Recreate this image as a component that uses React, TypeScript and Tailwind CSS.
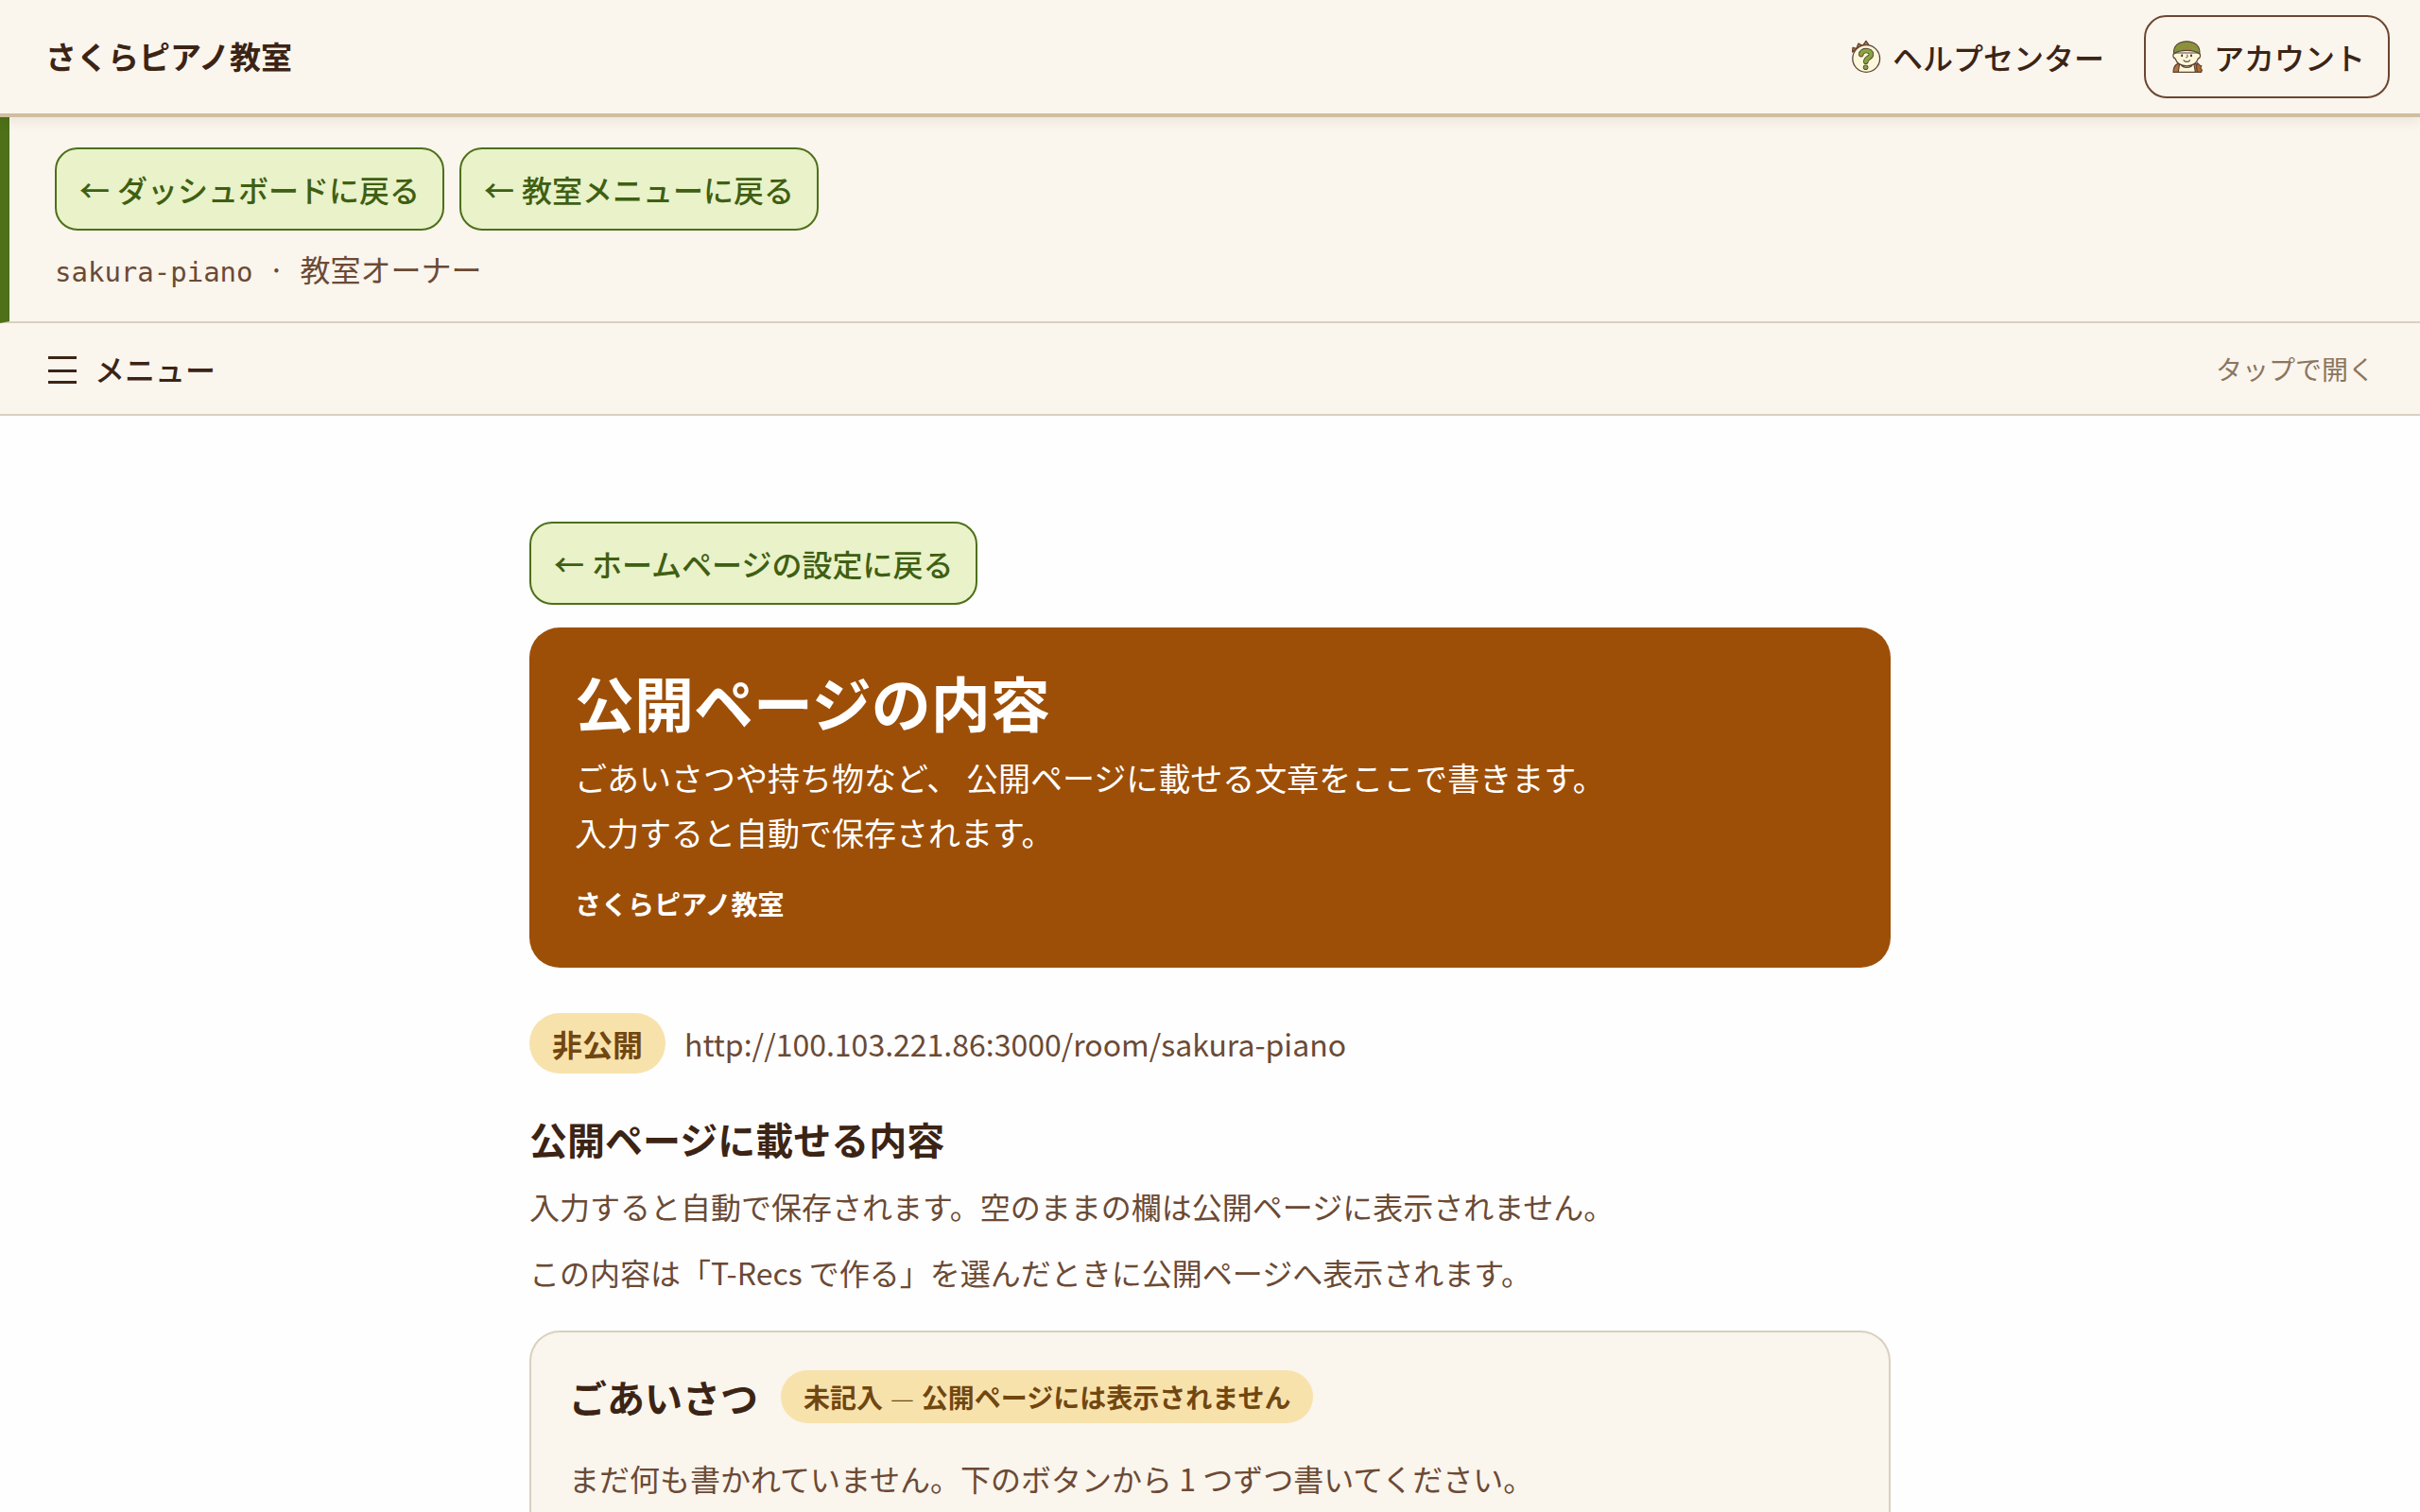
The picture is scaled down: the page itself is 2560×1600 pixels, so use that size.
import React from 'react';

interface BackLinkProps {
  label: string;
}

function BackLink({ label }: BackLinkProps) {
  return (
    <a
      href="#"
      className="inline-flex h-22 items-center gap-2 rounded-3xl border-2 border-[#4d7018] bg-[#e9f2c9] px-6 text-[32px] font-medium text-[#3f5f12]"
    >
      <span>←</span>
      {label}
    </a>
  );
}

// Egg with a question mark and three little spikes
function HelpIcon() {
  return (
    <svg viewBox="0 0 40 40" className="size-10 shrink-0" aria-hidden="true">
      <g stroke="#5e4332" strokeWidth="1.3" strokeLinejoin="round">
        <path d="M5.6 15 L6 10.4 L10.5 11.6 Z" fill="#c9742c" />
        <path d="M10 11 L12 6 L16.4 8.4 Z" fill="#c9742c" />
        <path d="M16.8 7.8 L20 3.4 L22.8 7.4 Z" fill="#c9742c" />
        <ellipse cx="20.2" cy="22" rx="14.4" ry="14.3" fill="#fdf8dc" />
      </g>
      <path
        d="M14.8 17.6 C14.8 12.2 25.6 12.2 25.4 17.8 C25.2 21.4 19.8 20.8 19.8 25.2"
        fill="none"
        stroke="#5e4332"
        strokeWidth="5.6"
        strokeLinecap="round"
      />
      <circle cx="19.6" cy="31.2" r="2.8" fill="#5e4332" />
      <path
        d="M14.8 17.6 C14.8 12.2 25.6 12.2 25.4 17.8 C25.2 21.4 19.8 20.8 19.8 25.2"
        fill="none"
        stroke="#86a63f"
        strokeWidth="3.8"
        strokeLinecap="round"
      />
      <circle cx="19.6" cy="31.2" r="1.9" fill="#86a63f" />
    </svg>
  );
}

function AccountIcon() {
  return (
    <svg viewBox="0 0 40 40" className="size-10 shrink-0" aria-hidden="true">
      <g stroke="#5e4332" strokeWidth="1.2" strokeLinejoin="round" strokeLinecap="round">
        <path d="M5 36.4 C5.2 31.4 6.2 29 9.5 27.6 H29 C32.6 29 33.8 31.4 34.4 36.4 Z" fill="#b8733a" />
        <path d="M29.5 30 L30.6 26.6 L32.8 29 L34.8 29.8 L33.8 32 L35.4 34 L34.6 36.4 H30.4 Z" fill="#b56a2c" />
        <path d="M10.2 36.4 L11.6 28 H27 L28.4 36.4 Z" fill="#fdf8dc" />
        <path d="M13.4 28 C14.4 32.4 24.2 32.4 25.2 28" fill="#fdf8dc" />
        <path d="M6.4 16 C3.8 17.6 4.6 21.4 7 21.8 C8.6 27 13.4 29.8 19.2 29.8 C25 29.8 29.8 27 31.4 21.8 C33.8 21.4 34.6 17.6 32 16 Z" fill="#fdf8dc" />
        <path d="M5.6 17 C4.6 8.4 11 3.8 19.2 3.8 C27.4 3.8 33.8 8.4 32.8 17 C28.8 14 24.6 13.4 19.2 13.4 C13.8 13.4 9.6 14 5.6 17 Z" fill="#85963f" />
        <path d="M16 23.8 C17.2 26 21.4 26 22.6 23.8" fill="none" />
        <path d="M19.6 18 C20.8 20 20.6 21 18.6 20.8" fill="none" strokeWidth="1" />
      </g>
      <g fill="#b9702c">
        <circle cx="12" cy="9" r=".8" />
        <circle cx="16" cy="7" r=".8" />
        <circle cx="20" cy="9" r=".8" />
        <circle cx="24" cy="7" r=".8" />
        <circle cx="27.6" cy="10" r=".8" />
        <circle cx="16" cy="11.4" r=".8" />
        <circle cx="23.6" cy="11.4" r=".8" />
        <circle cx="9.4" cy="12.6" r=".8" />
      </g>
      <ellipse cx="14.2" cy="18.8" rx="1" ry="1.5" fill="#4a3023" />
      <ellipse cx="24" cy="18.8" rx="1" ry="1.5" fill="#4a3023" />
    </svg>
  );
}

function SiteHeader() {
  return (
    <header className="relative z-10 flex h-31 items-center justify-between border-b-4 border-[#cfbf9f] bg-[#faf5ed] pr-8 pl-12 shadow-[0_4px_12px_rgba(60,36,21,0.08)]">
      <a href="#" className="text-[33px] font-bold">
        さくらピアノ教室
      </a>
      <nav className="flex items-center gap-4 text-[32px] font-medium">
        <a href="#" className="flex h-22 items-center gap-2 border-2 border-transparent px-6">
          <HelpIcon />
          ヘルプセンター
        </a>
        <button
          type="button"
          className="flex h-22 items-center gap-2 rounded-3xl border-2 border-[#6b4630] px-6"
        >
          <AccountIcon />
          アカウント
        </button>
      </nav>
    </header>
  );
}

function RoomBar() {
  return (
    <section className="border-b-2 border-l-10 border-b-[#d9d0bf] border-l-[#4d7018] bg-[#faf5ed] px-12 pt-8 pb-6">
      <div className="flex flex-wrap gap-4">
        <BackLink label="ダッシュボードに戻る" />
        <BackLink label="教室メニューに戻る" />
      </div>
      <p className="mt-3 flex items-baseline gap-4 text-[32px] leading-[56px] text-[#6b4a35]">
        <span className="font-['DejaVu_Sans_Mono','Noto_Sans_CJK_JP',monospace] text-[29px]">sakura-piano</span>
        <span>·</span>
        <span>教室オーナー</span>
      </p>
    </section>
  );
}

function MenuBar() {
  return (
    <button
      type="button"
      className="flex h-[98px] w-full items-center justify-between border-b-2 border-[#d9d0bf] bg-[#faf5ed] px-12"
    >
      <span className="flex items-center gap-4 text-[32px] font-medium">
        <svg viewBox="0 0 36 36" className="size-9" aria-hidden="true">
          <path d="M3 6.5 H33 M3 20.5 H33 M3 32.5 H33" stroke="#3c2415" strokeWidth="3" />
        </svg>
        メニュー
      </span>
      <span className="text-[28px] text-[#8b7560]">タップで開く</span>
    </button>
  );
}

export default function App() {
  return (
    <div className="min-h-screen bg-[#fefefe] font-['Noto_Sans_CJK_JP',sans-serif] text-[#3c2415]">
      <SiteHeader />
      <RoomBar />
      <MenuBar />

      <main className="mx-auto max-w-[1440px] pt-28">
        <BackLink label="ホームページの設定に戻る" />

        <section className="mt-6 rounded-4xl bg-[#9d4f08] px-12 pt-10 pb-12 text-white">
          <h1 className="text-[63px] leading-[76px] font-bold">公開ページの内容</h1>
          <p className="mt-3.5 text-[34px] leading-[58px]">
            ごあいさつや持ち物など、 公開ページに載せる文章をここで書きます。
            <br />
            入力すると自動で保存されます。
          </p>
          <p className="mt-6.5 text-[28px] leading-10 font-bold">さくらピアノ教室</p>
        </section>

        {/* Publish state */}
        <div className="mt-12 flex items-center gap-5">
          <span className="flex h-16 items-center rounded-full bg-[#f8e2ac] px-6 text-[32px] font-bold text-[#714711]">
            非公開
          </span>
          <a href="#" className="text-[32px] leading-[56px] text-[#6b4a35]">
            http://100.103.221.86:3000/room/sakura-piano
          </a>
        </div>

        <h2 className="mt-10 text-[40px] leading-[58px] font-bold">公開ページに載せる内容</h2>
        <div className="mt-3.5 flex flex-col gap-3.5 text-[32px] leading-[56px] text-[#6b4a35]">
          <p>入力すると自動で保存されます。空のままの欄は公開ページに表示されません。</p>
          <p>この内容は「T-Recs で作る」を選んだときに公開ページへ表示されます。</p>
        </div>

        <section className="mt-8.5 rounded-t-4xl border-2 border-b-0 border-[#d9d0bf] bg-[#faf5ed] p-10">
          <div className="flex items-center gap-6">
            <h3 className="text-[40px] leading-14 font-bold">ごあいさつ</h3>
            <span className="flex h-14 items-center gap-2 rounded-full bg-[#f8e2ac] px-6 text-[28px] font-bold text-[#714711]">
              <span>未記入</span>
              <span className="font-light">—</span>
              <span>公開ページには表示されません</span>
            </span>
          </div>
          <p className="mt-7.5 text-[32px] leading-[56px] text-[#6b4a35]">
            まだ何も書かれていません。下のボタンから 1 つずつ書いてください。
          </p>
        </section>
      </main>
    </div>
  );
}
